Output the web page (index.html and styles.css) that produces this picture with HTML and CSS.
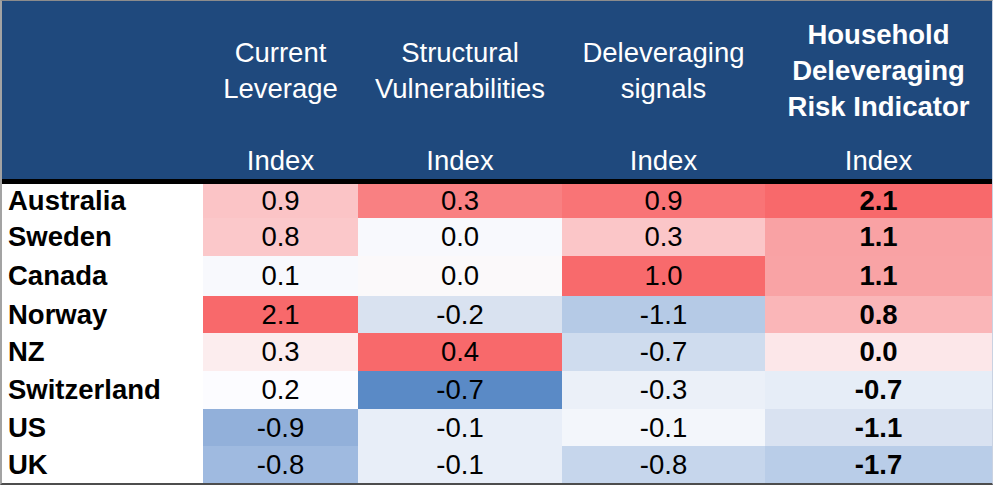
FILE: index.html
```html
<!DOCTYPE html>
<html>
<head>
<meta charset="utf-8">
<link rel="stylesheet" href="styles.css">
</head>
<body>
<div class="table">
  <div class="head">
    <div class="hcell"><div class="title"></div><div class="idx"></div></div>
    <div class="hcell"><div class="title"><span>Current</span><span>Leverage</span></div><div class="idx">Index</div></div>
    <div class="hcell"><div class="title"><span>Structural</span><span>Vulnerabilities</span></div><div class="idx">Index</div></div>
    <div class="hcell"><div class="title"><span>Deleveraging</span><span>signals</span></div><div class="idx">Index</div></div>
    <div class="hcell"><div class="title bold"><span>Household</span><span>Deleveraging</span><span>Risk Indicator</span></div><div class="idx">Index</div></div>
  </div>
  <div class="body">
    <div class="name">Australia</div>
    <div class="num" style="background:#fbc4c6">0.9</div>
    <div class="num" style="background:#f98082">0.3</div>
    <div class="num" style="background:#f97476">0.9</div>
    <div class="num bold" style="background:#f8696b">2.1</div>

    <div class="name">Sweden</div>
    <div class="num" style="background:#fbc8ca">0.8</div>
    <div class="num" style="background:#f8f9fd">0.0</div>
    <div class="num" style="background:#fbc6c8">0.3</div>
    <div class="num bold" style="background:#f9a2a4">1.1</div>

    <div class="name">Canada</div>
    <div class="num" style="background:#f8f9fd">0.1</div>
    <div class="num" style="background:#fbf9fa">0.0</div>
    <div class="num" style="background:#f86a6c">1.0</div>
    <div class="num bold" style="background:#f9a3a5">1.1</div>

    <div class="name">Norway</div>
    <div class="num" style="background:#f8696b">2.1</div>
    <div class="num" style="background:#d9e2f0">-0.2</div>
    <div class="num" style="background:#b5cae6">-1.1</div>
    <div class="num bold" style="background:#fab6b8">0.8</div>

    <div class="name">NZ</div>
    <div class="num" style="background:#fcedee">0.3</div>
    <div class="num" style="background:#f8696b">0.4</div>
    <div class="num" style="background:#cfdcee">-0.7</div>
    <div class="num bold" style="background:#fce7e9">0.0</div>

    <div class="name">Switzerland</div>
    <div class="num" style="background:#fcfcff">0.2</div>
    <div class="num" style="background:#5a8ac6">-0.7</div>
    <div class="num" style="background:#ebf0f8">-0.3</div>
    <div class="num bold" style="background:#e6edf7">-0.7</div>

    <div class="name">US</div>
    <div class="num" style="background:#92b0da">-0.9</div>
    <div class="num" style="background:#e8eef8">-0.1</div>
    <div class="num" style="background:#f3f6fb">-0.1</div>
    <div class="num bold" style="background:#d9e2f1">-1.1</div>

    <div class="name">UK</div>
    <div class="num" style="background:#9fbae0">-0.8</div>
    <div class="num" style="background:#e8eef8">-0.1</div>
    <div class="num" style="background:#c6d6ec">-0.8</div>
    <div class="num bold" style="background:#b9cde8">-1.7</div>
  </div>
</div>
</body>
</html>
```
FILE: styles.css
```css
html, body {
  margin: 0;
  padding: 0;
  background: #ffffff;
}
.table {
  width: 993px;
  height: 485px;
  box-sizing: border-box;
  border-left: 2px solid #a3a3a3;
  border-top: 1px solid #8c8c8c;
  border-right: 1px solid #c9d2e2;
  border-bottom: 2px solid #4d4d4d;
  font-family: "Liberation Sans", Arial, sans-serif;
  font-size: 27.5px;
  color: #000;
  display: flex;
  flex-direction: column;
}
.head {
  display: grid;
  grid-template-columns: 201px 155px 204px 203px 227px;
  background: #1f497d;
  color: #fff;
  border-bottom: 5px solid #000;
}
.hcell {
  display: flex;
  flex-direction: column;
  align-items: center;
  text-align: center;
}
.title {
  height: 142px;
  box-sizing: border-box;
  padding-bottom: 3px;
  display: flex;
  flex-direction: column;
  justify-content: center;
  align-items: center;
  line-height: 36px;
  white-space: nowrap;
}
.idx {
  height: 36px;
  line-height: 36px;
}
.bold {
  font-weight: bold;
}
.body {
  display: grid;
  grid-template-columns: 201px 155px 204px 203px 227px;
  grid-template-rows: 34px 38px 40px 37px 38px 38px 37px 37px;
}
.name {
  font-weight: bold;
  padding-left: 6px;
  display: flex;
  align-items: center;
  background: #fff;
}
.num {
  display: flex;
  align-items: center;
  justify-content: center;
}
```
